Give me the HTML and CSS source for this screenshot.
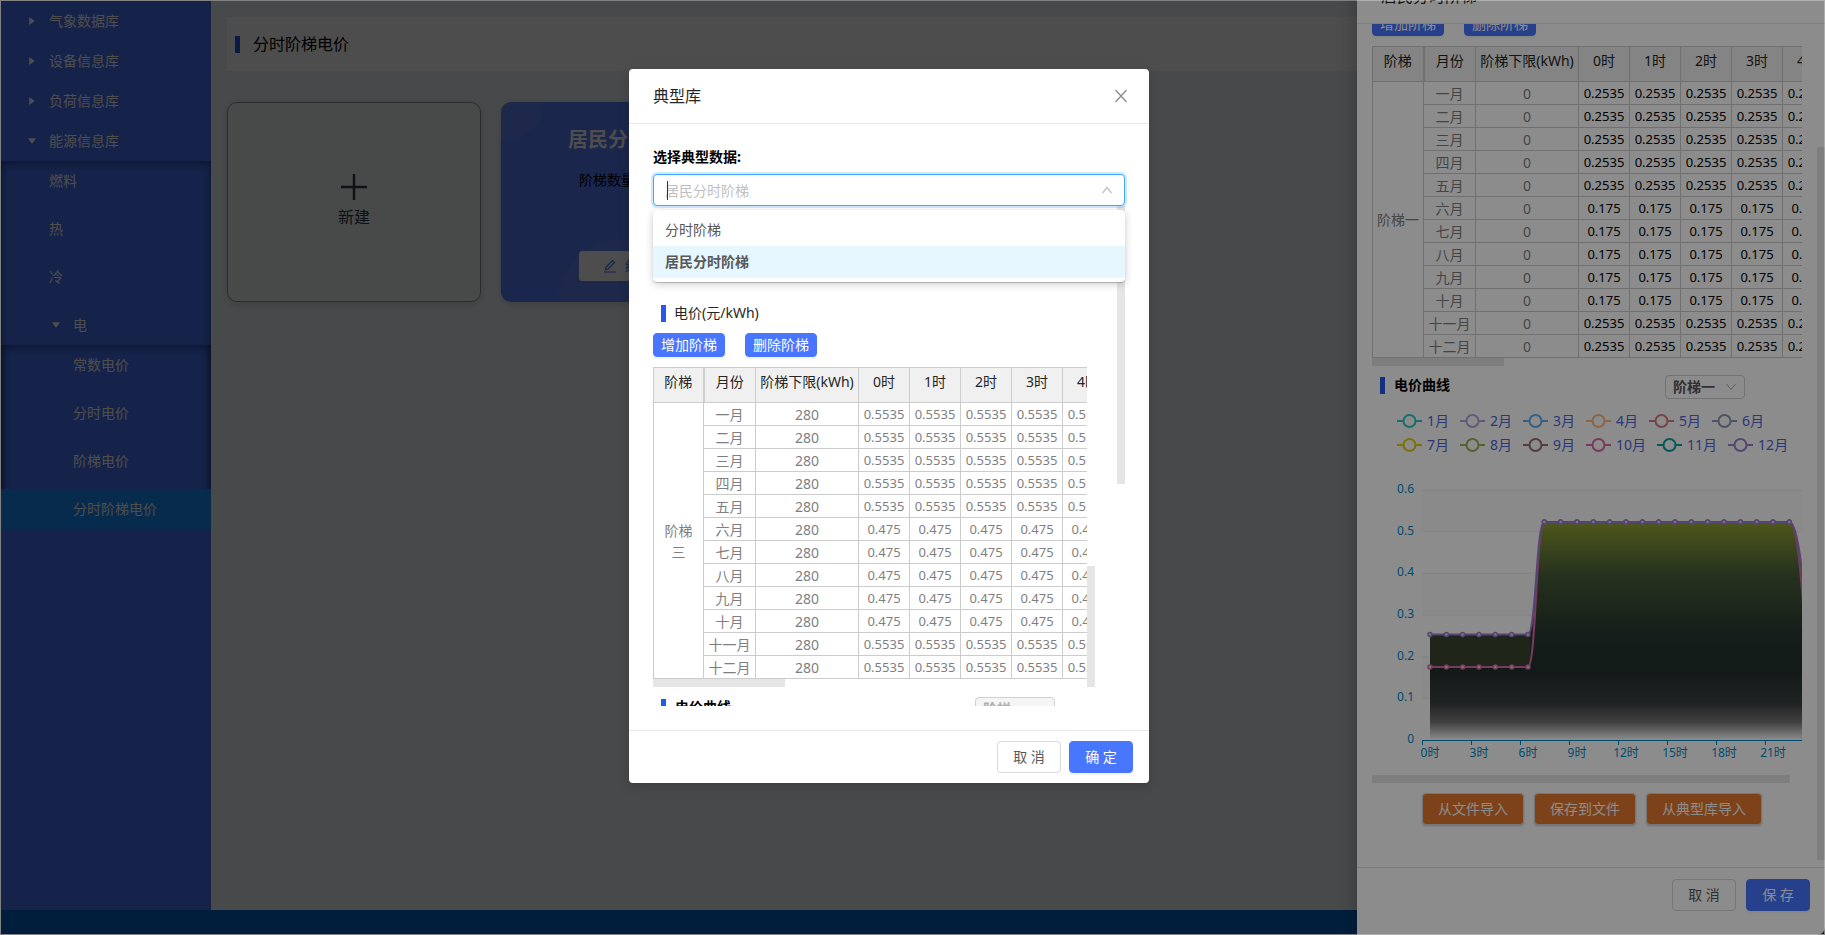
FILE: index.html
```html
<!DOCTYPE html>
<html lang="zh-CN">
<head>
<meta charset="utf-8">
<title>分时阶梯电价</title>
<link rel="stylesheet" href="styles.css">
</head>
<body>
<div class="app">
  <div class="layout">
    <nav class="sider">
      <ul class="menu">
        <li><a class="item" href="#"><i class="caret"></i>气象数据库</a></li>
        <li><a class="item" href="#"><i class="caret"></i>设备信息库</a></li>
        <li><a class="item" href="#"><i class="caret"></i>负荷信息库</a></li>
        <li><a class="item" href="#"><i class="caret open"></i>能源信息库</a>
          <ul class="menu sub">
            <li><a class="item" href="#">燃料</a></li>
            <li><a class="item" href="#">热</a></li>
            <li><a class="item" href="#">冷</a></li>
            <li><a class="item" href="#"><i class="caret open"></i>电</a>
              <ul class="menu sub deep">
                <li><a class="item" href="#">常数电价</a></li>
                <li><a class="item" href="#">分时电价</a></li>
                <li><a class="item" href="#">阶梯电价</a></li>
                <li><a class="item selected" href="#">分时阶梯电价</a></li>
              </ul>
            </li>
          </ul>
        </li>
      </ul>
    </nav>
    <main class="content">
      <header class="page-head"><i class="bar"></i><h1>分时阶梯电价</h1></header>
      <div class="cards">
        <button class="card create" type="button">
          <svg width="26" height="26" viewBox="0 0 26 26"><path d="M13 0v26M0 13h26" stroke="#2c3e50" stroke-width="2.5"/></svg>
          <span>新建</span>
        </button>
        <section class="card price">
          <h2>居民分时阶梯</h2>
          <p>阶梯数量：3</p>
          <button class="edit" type="button">
            <svg width="14" height="14" viewBox="0 0 14 14" fill="none" stroke="#4876ff" stroke-width="1.2"><path d="M3 8 9.5 1.5l2 2L5 10l-2.500.5zM1 13h12"/></svg>
            编辑
          </button>
        </section>
      </div>
    </main>
  </div>
  <footer class="foot"></footer>
</div>
<div class="mask"></div>

<aside class="drawer">
  <header class="drawer-head">居民分时阶梯</header>
  <div class="drawer-body">
    <div class="tools">
      <button class="btn small primary" type="button">增加阶梯</button>
      <button class="btn small primary" type="button">删除阶梯</button>
    </div>
    <div class="table-clip">
      <table class="grid wide" id="drawer-table"></table>
    </div>
    <i class="hbar short"></i>
    <div class="curve-head">
      <i class="bar"></i><label for="step">电价曲线</label>
      <span class="pick"><select id="step"><option>阶梯一</option></select><svg width="10" height="8" viewBox="0 0 10 8"><path d="M.5 1 5 6.500 9.500 1" fill="none" stroke="#aaa"/></svg></span>
    </div>
    <div class="legend" id="legend"></div>
    <div class="chart-clip">
      <svg class="chart" id="chart" width="450" height="310" viewBox="0 0 450 310">
        <defs>
          <linearGradient id="fill" gradientUnits="userSpaceOnUse" x1="0" y1="62" x2="0" y2="280">
            <stop offset="0" stop-color="#8ea033"/>
            <stop offset=".24" stop-color="#465b37"/>
            <stop offset=".51" stop-color="#28372f"/>
            <stop offset=".68" stop-color="#22302d"/>
            <stop offset=".83" stop-color="#373e41"/>
            <stop offset=".92" stop-color="#777"/>
            <stop offset="1" stop-color="#fff"/>
          </linearGradient>
        </defs>
      </svg>
    </div>
    <i class="hbar long"></i>
    <div class="files">
      <button class="btn orange" type="button">从文件导入</button>
      <button class="btn orange" type="button">保存到文件</button>
      <button class="btn orange" type="button">从典型库导入</button>
    </div>
    <i class="vbar"></i>
  </div>
  <footer class="drawer-foot">
    <button class="btn wide" type="button">取 消</button>
    <button class="btn wide primary" type="button">保 存</button>
  </footer>
</aside>
<div class="mask"></div>

<div class="modal" role="dialog" aria-labelledby="modal-title">
  <header class="modal-head">
    <h2 id="modal-title">典型库</h2>
    <button class="close" type="button" aria-label="关闭"><svg width="12" height="14" viewBox="0 0 12 14"><path d="M.5 1l11 12M11.500 1l-11 12" stroke="#8c8c8c" stroke-width="1.300"/></svg></button>
  </header>
  <div class="modal-body">
    <label class="field-label" for="typical">选择典型数据:</label>
    <div class="combo">
      <input id="typical" type="text" placeholder="居民分时阶梯">
      <i class="cursor"></i>
      <svg width="10" height="8" viewBox="0 0 10 8"><path d="M.5 7 5 1.500 9.500 7" fill="none" stroke="#bfbfbf" stroke-width="1.200"/></svg>
      <ul class="options">
        <li>分时阶梯</li>
        <li class="active">居民分时阶梯</li>
      </ul>
    </div>
    <div class="scroll">
      <div class="sub-title"><i class="bar"></i>电价(元/kWh)</div>
      <div class="tools">
        <button class="btn small primary" type="button">增加阶梯</button>
        <button class="btn small primary" type="button">删除阶梯</button>
      </div>
      <div class="table-clip">
        <table class="grid" id="modal-table"></table>
      </div>
      <i class="hbar short"></i>
      <div class="curve-head">
        <i class="bar"></i><label for="step2">电价曲线</label>
        <span class="pick"><select id="step2" disabled><option>阶梯一</option></select><svg width="10" height="8" viewBox="0 0 10 8"><path d="M.5 1 5 6.500 9.500 1" fill="none" stroke="#bbb"/></svg></span>
      </div>
      <i class="vbar"></i>
      <i class="vbar inner"></i>
    </div>
  </div>
  <footer class="modal-foot">
    <button class="btn wide" type="button">取 消</button>
    <button class="btn wide primary" type="button">确 定</button>
  </footer>
</div>
<div class="frame"></div>
<script src="script.js"></script>
</body>
</html>
```
FILE: styles.css
```css
* { box-sizing: border-box; }
body {
  margin: 0;
  height: 100vh;
  overflow: hidden;
  position: relative;
  background: #fff;
  font: 14px/22px "Noto Sans", "Noto Sans CJK SC", sans-serif;
  color: #262626;
}
button, input, select { font: inherit; color: inherit; margin: 0; }
ul { list-style: none; margin: 0; padding: 0; }
h1, h2, p { margin: 0; font-weight: 400; }
svg { display: block; }

.app { height: 100vh; display: flex; flex-direction: column; padding: 1px; }
.layout { flex: 1; display: flex; min-height: 0; }
.foot { height: 24px; background: #0766cd; }
.sider { width: 210px; background: #4874f5; }
.item {
  display: flex;
  align-items: center;
  height: 40px;
  padding-left: 24px;
  color: #fff;
  text-decoration: none;
}
.caret {
  width: 8px;
  height: 8px;
  margin: 0 13px 0 3px;
  background: #fff;
  clip-path: polygon(15% 0, 85% 50%, 15% 100%);
}
.caret.open { clip-path: polygon(0 15%, 100% 15%, 50% 85%); }
.sub { display: flex; flex-direction: column; gap: 8px; box-shadow: inset 0 2px 8px rgba(0, 0, 0, .45); }
.sub .item { padding-left: 48px; }
.deep .item { padding-left: 72px; }
.item.selected { background: #1590fc; }

.bar { width: 5px; height: 17px; background: #245ae6; flex: none; }
.content { flex: 1; background: #eef4f8; padding: 16px 0 0 16px; }
.page-head { display: flex; align-items: center; gap: 13px; height: 54px; padding-left: 8px; background: #fff; }
.page-head h1 { font-size: 16px; color: #000; }
.cards { display: flex; gap: 20px; margin-top: 31px; }
.card { width: 254px; height: 200px; border-radius: 10px; box-shadow: 0 2px 8px rgba(0, 0, 0, .15); }
.create {
  display: flex;
  flex-direction: column;
  align-items: center;
  justify-content: center;
  gap: 6px;
  padding-bottom: 4px;
  background: #eff3f4;
  border: 1px solid #8c9696;
  font-size: 16px;
  color: #2c3e50;
}
.price {
  display: flex;
  flex-direction: column;
  align-items: center;
  padding: 26px 0 21px;
  background:
    radial-gradient(circle at 4px 0, #6287fa 38px, transparent 39px),
    radial-gradient(circle at 120px 200px, #6287fa 62px, transparent 63px),
    #587ffa;
  color: #000;
}
.price h2 { font-size: 20px; line-height: 24px; font-weight: 700; color: #fff; }
.price p { width: 98px; margin-top: 17px; white-space: nowrap; }
.edit {
  display: flex;
  align-items: center;
  justify-content: center;
  gap: 8px;
  width: 98px;
  height: 30px;
  margin-top: auto;
  border: 0;
  border-radius: 3px;
  background: #fff;
  color: #4876ff;
}

.mask { position: absolute; inset: 0; background: rgba(0, 0, 0, .45); }
.frame { position: absolute; inset: 0; border: 1px solid rgba(255, 255, 255, .3); pointer-events: none; }

.btn {
  height: 32px;
  padding: 0 15px;
  border: 1px solid #d9d9d9;
  border-radius: 4px;
  background: #fff;
  color: #595959;
  line-height: 20px;
  white-space: nowrap;
}
.btn.primary { background: #4876ff; border-color: #4876ff; color: #fff; box-shadow: 0 2px 2px rgba(0, 0, 0, .05); }
.btn.small { height: 24px; padding: 0 7px; }
.btn.wide { min-width: 64px; }
.btn.orange { background: #e3782f; color: #fff; box-shadow: 0 1px 2px rgba(0, 0, 0, .2); }

.tools { display: flex; gap: 20px; }
.table-clip { overflow: hidden; margin-top: 10px; }
.grid { table-layout: fixed; border-collapse: collapse; color: #7f7f7f; }
.grid th, .grid td { border: 1px solid #ccc; padding: 0 3px; height: 23px; text-align: center; line-height: 21px; }
.grid th { height: 35px; padding-bottom: 8px; background: #f0f0f0; color: #262626; font-weight: 400; white-space: nowrap; }
.grid th + th { padding: 0 0 8px; }
.grid th:first-child { border-right-width: 2px; }
.grid .num { font-size: 13px; padding: 0; }
.grid.wide .num { color: #000; }

.hbar { display: block; height: 8px; background: #e5e5e5; }
.vbar { position: absolute; right: 0; width: 8px; background: #e5e5e5; }
.curve-head { display: flex; align-items: flex-start; padding-left: 8px; font-weight: 700; color: #000; }
.curve-head .bar { margin-top: 2px; }
.curve-head label { margin: 0 auto 0 9px; line-height: 20px; }
.pick { position: relative; }
.pick select {
  appearance: none;
  display: block;
  width: 80px;
  height: 24px;
  padding: 0 8px 0 7px;
  border: 1px solid #d0d0d0;
  border-radius: 4px;
  background: #fff;
  color: #595959;
  line-height: 20px;
}
.pick select:disabled { background: #f5f5f5; color: #b0b0b0; opacity: 1; }
.pick svg { position: absolute; right: 9px; top: 8px; }

.drawer {
  position: absolute;
  top: -31px;
  right: 0;
  bottom: 0;
  width: 468px;
  display: flex;
  flex-direction: column;
  background: #fff;
  border-radius: 0 0 8px 0;
  box-shadow: -6px 0 16px rgba(0, 0, 0, .15);
}
.drawer-head { padding: 16px 24px; border-bottom: 1px solid #e8e8e8; font-size: 16px; }
.drawer-body { position: relative; flex: 1; min-height: 0; overflow: hidden; padding: 0 23px 0 15px; }
.drawer-body .tools { margin-top: -12px; }
.grid.wide { width: 462px; }
.hbar.short { width: 132px; }
.drawer-body .curve-head { padding-right: 57px; margin-top: 9px; }
.legend { display: flex; flex-wrap: wrap; gap: 2px 11px; padding: 11px 0 0 25px; color: #5264d8; }
.legend span { display: flex; align-items: center; gap: 5px; }
.chart-clip { overflow: hidden; margin-top: 4px; }
.chart { font-size: 12px; fill: #008acd; }
.drawer-body .long { width: 418px; margin-top: 5px; }
.files { display: flex; gap: 10px; padding: 10px 0 0 50px; }
.drawer-body .vbar { top: 123px; bottom: 7px; }
.drawer-foot { display: flex; justify-content: flex-end; gap: 10px; padding: 11px 15px 24px; border-top: 1px solid #e0e0e0; }

.modal {
  position: absolute;
  left: 629px;
  top: 69px;
  width: 520px;
  background: #fff;
  border-radius: 4px;
  box-shadow: 0 4px 12px rgba(0, 0, 0, .15);
}
.modal-head { display: flex; justify-content: space-between; align-items: center; height: 55px; padding: 0 22px 0 24px; border-bottom: 1px solid #e8e8e8; }
.modal-head h2 { font-size: 16px; }
.close { padding: 0; border: 0; background: none; }
.modal-body { padding: 22px 24px 24px; }
.field-label { display: block; margin-bottom: 6px; font-weight: 700; color: #000; }
.combo { position: relative; z-index: 1; }
.combo input {
  display: block;
  width: 100%;
  height: 32px;
  padding: 0 11px;
  border: 1px solid #40a9ff;
  border-radius: 4px;
  outline: 0;
  background: #fff;
  box-shadow: 0 0 0 2px rgba(24, 144, 255, .2);
}
.combo input::placeholder { color: #bfbfbf; }
.combo svg { position: absolute; right: 13px; top: 12px; }
.cursor { position: absolute; left: 14px; top: 7px; width: 1px; height: 19px; background: #333; }
.options {
  position: absolute;
  top: 36px;
  left: 0;
  right: 0;
  padding: 4px 0;
  background: #fff;
  border-radius: 4px;
  box-shadow: 0 2px 8px rgba(0, 0, 0, .2), 0 1px 1px rgba(0, 0, 0, .2);
  color: #595959;
}
.options li { padding: 5px 12px; }
.options .active { background: #e6f7ff; font-weight: 600; }
.scroll { position: relative; height: 500px; overflow: hidden; padding: 96px 38px 0 0; }
.sub-title { display: flex; align-items: center; gap: 8px; padding-left: 8px; margin-bottom: 9px; }
.modal .grid { width: 460px; }
.modal .curve-head { padding-right: 32px; margin-top: 10px; }
.modal .vbar { top: 0; height: 278px; }
.modal .vbar.inner { right: 30px; top: 360px; height: 121px; }
.modal-foot { display: flex; justify-content: flex-end; gap: 8px; padding: 10px 16px; border-top: 1px solid #e8e8e8; }
```
FILE: script.js
```js
const months = ['一', '二', '三', '四', '五', '六', '七', '八', '九', '十', '十一', '十二'];

function buildTable(id, widths, step, limit, winter, summer) {
  const cols = widths.map(w => `<col style="width:${w}px">`).join('');
  const hours = [0, 1, 2, 3, 4];
  const head = ['阶梯', '月份', '阶梯下限(kWh)', ...hours.map(h => h + '时')]
    .map(t => `<th>${t}</th>`).join('');
  const rows = months.map((m, i) => {
    const price = i > 4 && i < 10 ? summer : winter;
    return `<tr>${i ? '' : `<td rowspan="12">${step}</td>`}<td>${m}月</td><td>${limit}</td>` +
      hours.map(() => `<td class="num">${price}</td>`).join('') + '</tr>';
  }).join('');
  document.getElementById(id).innerHTML =
    `<colgroup>${cols}</colgroup><thead><tr>${head}</tr></thead><tbody>${rows}</tbody>`;
}
buildTable('drawer-table', [51, 52, 103, 51, 51, 51, 51, 51], '阶梯一', '0', '0.2535', '0.175');
buildTable('modal-table', [50, 52, 103, 51, 51, 51, 51, 51], '阶梯<br>三', '280', '0.5535', '0.475');

const colors = ['#2ec7c9', '#b6a2de', '#5ab1ef', '#ffb980', '#d87a80', '#8d98b3',
  '#e5cf0d', '#97b552', '#95706d', '#dc69aa', '#07a2a4', '#9a7fd1'];
document.getElementById('legend').innerHTML = colors.map((c, i) =>
  `<span><svg width="25" height="14" viewBox="0 0 25 14" fill="#fff" stroke="${c}" stroke-width="2"><path d="M0 7h25"/><circle cx="12.5" cy="7" r="6"/></svg>${i + 1}月</span>`
).join('');

// Plot area: x = 50 at the axis, 49px per three hours; y = 280 at zero, 250px for 0.6
const hourX = h => 58 + h * 49 / 3;
const priceY = p => 280 - p * 250 / 0.6;
let out = '';
[0, 0.1, 0.2, 0.3, 0.4, 0.5, 0.6].forEach((v, i) => {
  const y = priceY(v);
  if (i % 2 === 0 && i) out += `<rect x="50" y="${y}" width="400" height="41" fill="#c8c8c8" fill-opacity=".06"/>`;
  if (i) out += `<path d="M50 ${y}H450" stroke="#eee"/>`;
  out += `<text x="42" y="${y + 3}" text-anchor="end">${v}</text>`;
});
const curve = low => {
  const a = priceY(low), b = priceY(0.523), x6 = hourX(6), x7 = hourX(7), x22 = hourX(22), x23 = hourX(23);
  const mid = (x6 + x7) / 2;
  return `M58 ${a}H${x6}C${mid} ${a} ${mid} ${b} ${x7} ${b}H${x22}C${x22 + 10} ${b} ${x23} ${a - 35} ${x23} ${a}`;
};
out += `<path d="${curve(0.2535)}V280H58Z" fill="url(#fill)"/>`;
out += `<rect x="58" y="${priceY(0.2535)}" width="100" height="${priceY(0.175) - priceY(0.2535)}" fill="#3a452f"/>`;
[[0.175, '#dc69aa'], [0.2535, '#9a7fd1']].forEach(([low, c]) => {
  out += `<path d="${curve(low)}" fill="none" stroke="${c}" stroke-width="2"/>`;
  for (let h = 0; h < 23; h++) {
    out += `<circle cx="${hourX(h)}" cy="${priceY(h < 7 ? low : 0.523)}" r="2" fill="#ddd" stroke="${c}" stroke-width="1.5"/>`;
  }
});
out += '<path d="M50 280.500H450" stroke="#008acd" stroke-width="1"/>';
for (let h = 0; h < 24; h += 3) {
  out += `<path d="M${50.5 + h / 3 * 49} 280v5" stroke="#008acd"/><text x="${hourX(h)}" y="297" text-anchor="middle">${h}时</text>`;
}
document.getElementById('chart').insertAdjacentHTML('beforeend', out);
```
